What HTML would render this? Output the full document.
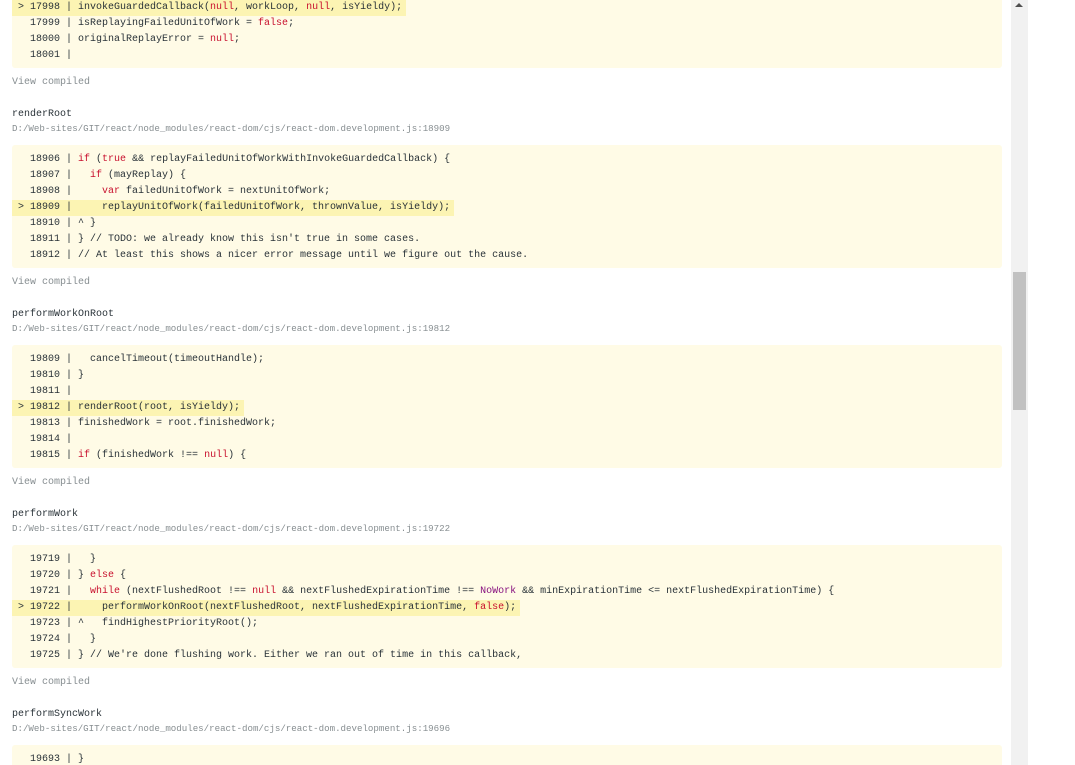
<!DOCTYPE html>
<html><head><meta charset="utf-8"><style>
html,body{margin:0;padding:0;background:#fff;overflow:hidden;width:1075px;height:765px}
body{position:relative;font-family:"Liberation Mono",monospace;color:#293238}
.wrap{position:absolute;left:12px;top:-55px;width:990px}
.panel{background:#fffbe6;padding:7px 0 4px 0;height:112px;border-radius:3px}
.l{height:16px;line-height:16px;font-size:10px;white-space:pre;padding-left:6px}
.h{background:#fcf4b3;display:inline-block;padding-right:4px;margin-left:-6px;padding-left:6px}
.k{color:#c8102e}
.p{color:#881280}
.vc{font-size:10px;color:#878e91;height:16px;line-height:16px;margin-top:7px}
.nm{font-size:10px;margin-top:16px;height:15px;line-height:16px}
.pt{font-size:9.15px;color:#878e91;height:14px;line-height:14px;margin-bottom:9px}
.sb{position:absolute;left:1011px;top:0;width:17px;height:765px;background:#f1f1f1}
.th{position:absolute;left:1013px;top:272px;width:13px;height:138px;background:#c1c1c1}
.ar{position:absolute;left:1015px;top:3px;width:0;height:0;border-left:4px solid transparent;border-right:4px solid transparent;border-bottom:4px solid #505050}
</style></head><body>
<div class="wrap">
<div class="panel">
<div class="l">  17995 | </div>
<div class="l">  17996 | </div>
<div class="l">  17997 | </div>
<div class="l"><span class="h">&gt; 17998 | invokeGuardedCallback(<span class="k">null</span>, workLoop, <span class="k">null</span>, isYieldy);</span></div>
<div class="l">  17999 | isReplayingFailedUnitOfWork = <span class="k">false</span>;</div>
<div class="l">  18000 | originalReplayError = <span class="k">null</span>;</div>
<div class="l">  18001 | </div>
</div>
<div class="vc">View compiled</div>
<div class="nm">renderRoot</div>
<div class="pt">D:/Web-sites/GIT/react/node_modules/react-dom/cjs/react-dom.development.js:18909</div>
<div class="panel">
<div class="l">  18906 | <span class="k">if</span> (<span class="k">true</span> &amp;&amp; replayFailedUnitOfWorkWithInvokeGuardedCallback) {</div>
<div class="l">  18907 |   <span class="k">if</span> (mayReplay) {</div>
<div class="l">  18908 |     <span class="k">var</span> failedUnitOfWork = nextUnitOfWork;</div>
<div class="l"><span class="h">&gt; 18909 |     replayUnitOfWork(failedUnitOfWork, thrownValue, isYieldy);</span></div>
<div class="l">  18910 | ^ }</div>
<div class="l">  18911 | } // TODO: we already know this isn't true in some cases.</div>
<div class="l">  18912 | // At least this shows a nicer error message until we figure out the cause.</div>
</div>
<div class="vc">View compiled</div>
<div class="nm">performWorkOnRoot</div>
<div class="pt">D:/Web-sites/GIT/react/node_modules/react-dom/cjs/react-dom.development.js:19812</div>
<div class="panel">
<div class="l">  19809 |   cancelTimeout(timeoutHandle);</div>
<div class="l">  19810 | }</div>
<div class="l">  19811 | </div>
<div class="l"><span class="h">&gt; 19812 | renderRoot(root, isYieldy);</span></div>
<div class="l">  19813 | finishedWork = root.finishedWork;</div>
<div class="l">  19814 | </div>
<div class="l">  19815 | <span class="k">if</span> (finishedWork !== <span class="k">null</span>) {</div>
</div>
<div class="vc">View compiled</div>
<div class="nm">performWork</div>
<div class="pt">D:/Web-sites/GIT/react/node_modules/react-dom/cjs/react-dom.development.js:19722</div>
<div class="panel">
<div class="l">  19719 |   }</div>
<div class="l">  19720 | } <span class="k">else</span> {</div>
<div class="l">  19721 |   <span class="k">while</span> (nextFlushedRoot !== <span class="k">null</span> &amp;&amp; nextFlushedExpirationTime !== <span class="p">NoWork</span> &amp;&amp; minExpirationTime &lt;= nextFlushedExpirationTime) {</div>
<div class="l"><span class="h">&gt; 19722 |     performWorkOnRoot(nextFlushedRoot, nextFlushedExpirationTime, <span class="k">false</span>);</span></div>
<div class="l">  19723 | ^   findHighestPriorityRoot();</div>
<div class="l">  19724 |   }</div>
<div class="l">  19725 | } // We're done flushing work. Either we ran out of time in this callback,</div>
</div>
<div class="vc">View compiled</div>
<div class="nm">performSyncWork</div>
<div class="pt">D:/Web-sites/GIT/react/node_modules/react-dom/cjs/react-dom.development.js:19696</div>
<div class="panel" style="height:20px">
<div class="l">  19693 | }</div>
</div>
</div>
<div class="sb"></div><div class="th"></div><div class="ar"></div>
</body></html>
